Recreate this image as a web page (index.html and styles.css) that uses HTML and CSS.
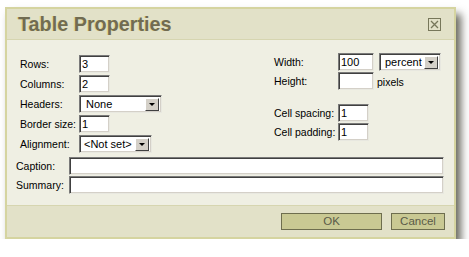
FILE: index.html
```html
<!DOCTYPE html>
<html lang="en">
<head>
    <meta charset="UTF-8">
    <title>Table Properties</title>
    <link rel="stylesheet" href="styles.css">
</head>
<body>
    <div class="dialog">
        <div class="titlebar">
            <h1>Table Properties</h1>
            <span class="close">
                <svg width="13" height="13" viewBox="0 0 13 13">
                    <rect x="0.5" y="0.5" width="12" height="12" fill="none" stroke="#77775a"/>
                    <path d="M3 3 L10 10 M10 3 L3 10" stroke="#77775a" stroke-width="1.3"/>
                </svg>
            </span>
        </div>
        <div class="content">
            <div class="top">
                <div class="left">
                    <label>Rows:</label>
                    <input class="small" type="text" value="3">
                    <label>Columns:</label>
                    <input class="small" type="text" value="2">
                    <label>Headers:</label>
                    <div class="select headers"><span>None</span><i class="arrow"></i></div>
                    <label>Border size:</label>
                    <input class="small" type="text" value="1">
                    <label>Alignment:</label>
                    <div class="select align"><span>&lt;Not set&gt;</span><i class="arrow"></i></div>
                </div>
                <div class="right">
                    <label>Width:</label>
                    <div class="pair">
                        <input class="mid" type="text" value="100">
                        <div class="select unit"><span>percent</span><i class="arrow"></i></div>
                    </div>
                    <label>Height:</label>
                    <div class="pair">
                        <input class="mid" type="text" value="">
                        <span class="unit-text">pixels</span>
                    </div>
                    <div class="spacer"></div>
                    <label>Cell spacing:</label>
                    <input class="small" type="text" value="1">
                    <label>Cell padding:</label>
                    <input class="small" type="text" value="1">
                </div>
            </div>
            <div class="wide">
                <label>Caption:</label>
                <input type="text" value="">
                <label>Summary:</label>
                <input type="text" value="">
            </div>
        </div>
        <div class="footer">
            <button class="ok">OK</button>
            <button class="cancel">Cancel</button>
        </div>
    </div>
</body>
</html>
```

FILE: styles.css
```css
body {
    margin: 0;
    background: #fff;
    font-family: "Liberation Sans", Arial, sans-serif;
    font-size: 10.5px;
    color: #000;
}
.dialog {
    width: 447px;
    margin: 7px 0 0 5px;
    border: 2px solid #d5d4a0;
    background: #efefe3;
    box-shadow: 5px 7px 8px rgba(40, 40, 25, 0.7);
}
.titlebar {
    height: 30px;
    background: #e2e1c8;
    border-bottom: 1px solid #d6d5b0;
    display: flex;
    align-items: center;
    justify-content: space-between;
    padding: 0 13px 0 11px;
}
h1 {
    margin: 0;
    font-size: 19.8px;
    font-weight: bold;
    color: #716c52;
    text-shadow: -1px 0 0 #e0d890;
}
.close {
    display: flex;
    margin-top: 1px;
}
.content {
    padding: 13px 10px 11px 9px;
}
.top {
    display: flex;
    justify-content: space-between;
}
.left {
    display: grid;
    grid-template-columns: 59px auto;
    grid-auto-rows: 18px;
    row-gap: 2px;
    align-items: center;
    justify-items: start;
    padding: 2px 0 0 4px;
}
.right {
    display: grid;
    grid-template-columns: 64px auto;
    grid-template-rows: 18px 18px 12px 18px 18px;
    row-gap: 1px;
    align-items: center;
    justify-items: start;
    margin-right: 3px;
}
.spacer {
    grid-column: span 2;
}
.pair {
    display: flex;
    align-items: center;
    gap: 5px;
}
.unit-text {
    margin-left: -2px;
    margin-top: 1px;
}
input, .select {
    box-sizing: border-box;
    height: 18px;
    border: 1px solid;
    border-color: #7a7a7a #e8e8e0 #e8e8e0 #7a7a7a;
    box-shadow: inset 1px 1px 0 #404040, inset -1px -1px 0 #d4d0c8;
    background: #fff;
    font-family: inherit;
    font-size: 11px;
    padding: 0 2px;
    margin: 0;
    outline: none;
}
input.small {
    width: 31px;
}
input.mid {
    width: 36px;
}
.select {
    display: flex;
    align-items: center;
    justify-content: space-between;
    padding: 0 2px 0 6px;
}
.select.headers {
    width: 83px;
}
.select.align {
    width: 73px;
    padding-left: 4px;
}
.select.unit {
    width: 62px;
    padding-left: 5px;
}
.arrow {
    width: 14px;
    height: 13px;
    box-sizing: border-box;
    background: #d4d0c8;
    border: 1px solid;
    border-color: #fff #404040 #404040 #fff;
    display: flex;
    align-items: center;
    justify-content: center;
}
.arrow::after {
    content: "";
    border-left: 3px solid transparent;
    border-right: 3px solid transparent;
    border-top: 3px solid #000;
}
.wide {
    display: grid;
    grid-template-columns: 53px 1fr;
    grid-auto-rows: 18px;
    row-gap: 1px;
    align-items: center;
    margin-top: 4px;
}
.wide input {
    width: 100%;
}
.footer {
    height: 32px;
    box-sizing: border-box;
    background: #e2e1c8;
    border-top: 1px solid #d6d5b0;
    display: flex;
    justify-content: flex-end;
    align-items: flex-start;
    gap: 9px;
    padding: 7px 9px 0 0;
}
button {
    height: 17px;
    background: #c9c993;
    border: 1px solid #6e6e4e;
    color: #5a5a48;
    font-family: inherit;
    font-size: 11.5px;
    padding: 0;
    line-height: 15px;
}
button.ok {
    width: 101px;
}
button.cancel {
    width: 54px;
}
```
